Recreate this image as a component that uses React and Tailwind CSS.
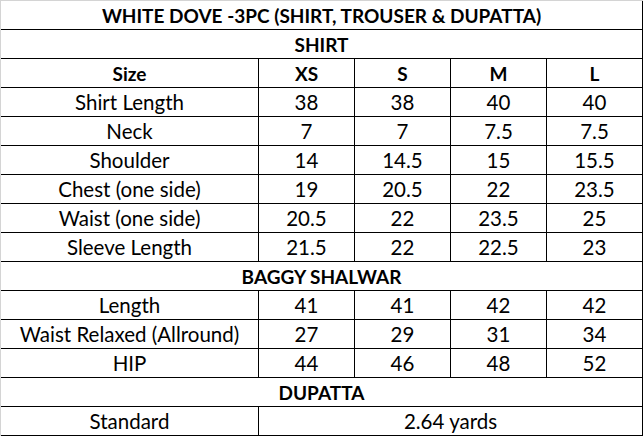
import React from 'react';

const shirtRows = [
  ['Shirt Length', '38', '38', '40', '40'],
  ['Neck', '7', '7', '7.5', '7.5'],
  ['Shoulder', '14', '14.5', '15', '15.5'],
  ['Chest (one side)', '19', '20.5', '22', '23.5'],
  ['Waist (one side)', '20.5', '22', '23.5', '25'],
  ['Sleeve Length', '21.5', '22', '22.5', '23'],
];

const shalwarRows = [
  ['Length', '41', '41', '42', '42'],
  ['Waist Relaxed (Allround)', '27', '29', '31', '34'],
  ['HIP', '44', '46', '48', '52'],
];

const SectionRow = ({ children }) => (
  <div className="flex h-[29px] items-center justify-center border-b border-r border-black text-[19px] font-bold">
    {children}
  </div>
);

const DataRow = ({ cells, bold }) => (
  <div className={`flex h-[29px] border-b border-black ${bold ? 'font-bold text-[19px]' : 'text-[20.5px]'}`}>
    <div className="w-[258px] flex items-center justify-center border-r border-black">{cells[0]}</div>
    {cells.slice(1).map((c, i) => (
      <div key={i} className="w-[96px] flex items-center justify-center border-r border-black">
        {c}
      </div>
    ))}
  </div>
);

const App = () => {
  return (
    <div
      className="w-[643px] h-[436px] bg-white text-black border-t border-l border-[#d4d4d4] leading-none overflow-hidden"
      style={{ fontFamily: 'Lato, "Liberation Sans", sans-serif' }}
    >
      <SectionRow>WHITE DOVE -3PC (SHIRT, TROUSER &amp; DUPATTA)</SectionRow>
      <SectionRow>SHIRT</SectionRow>
      <DataRow bold cells={['Size', 'XS', 'S', 'M', 'L']} />
      {shirtRows.map((r) => (
        <DataRow key={r[0]} cells={r} />
      ))}
      <SectionRow>BAGGY SHALWAR</SectionRow>
      {shalwarRows.map((r) => (
        <DataRow key={r[0]} cells={r} />
      ))}
      <SectionRow>DUPATTA</SectionRow>
      <div className="flex h-[29px] border-b border-black text-[20.5px]">
        <div className="w-[258px] flex items-center justify-center border-r border-black">Standard</div>
        <div className="w-[384px] flex items-center justify-center border-r border-black">2.64 yards</div>
      </div>
    </div>
  );
};

export default App;
